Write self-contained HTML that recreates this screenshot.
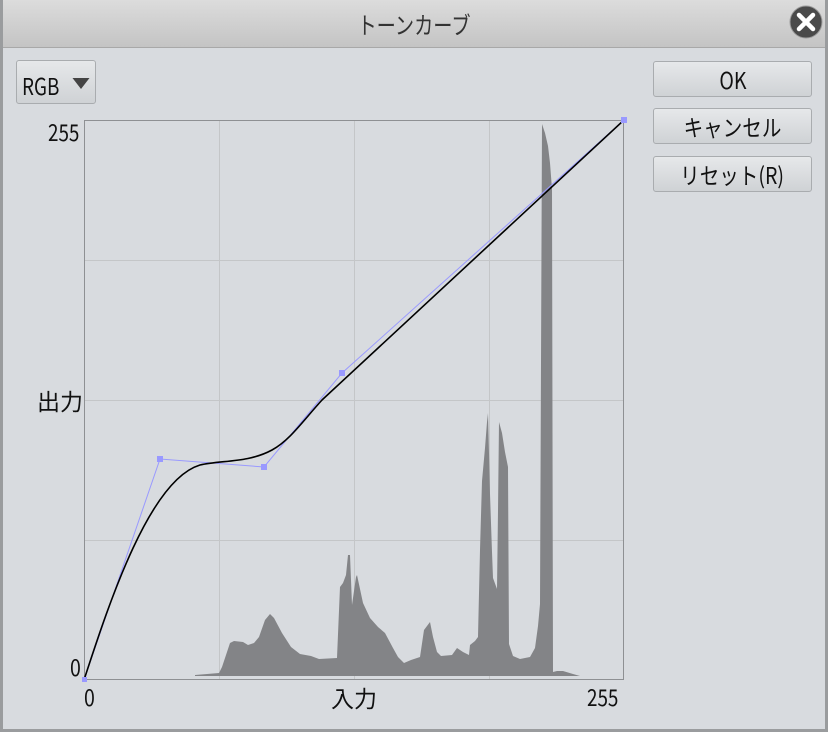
<!DOCTYPE html>
<html><head><meta charset="utf-8"><style>
body{margin:0;width:828px;height:732px;overflow:hidden;background:#9a9c9e;font-family:"Liberation Sans","Noto Sans CJK JP",sans-serif;}
#win{position:absolute;left:3px;top:0;width:822px;height:729px;background:#d8dbdf;}
#title{position:absolute;left:0;top:0;width:822px;height:47px;background:linear-gradient(#dcdcdc,#c4c4c4);border-bottom:1px solid #a8a8a8;}
#title span{position:absolute;left:0;width:822px;top:6px;text-align:center;font-size:24px;color:#333;font-family:"Noto Sans CJK JP",sans-serif;transform:scaleX(.8);}
.btn{position:absolute;background:linear-gradient(#e6e8ea,#cfd2d5);border:1px solid #a9acaf;border-radius:3px;text-align:center;color:#111;font-family:"Noto Sans CJK JP",sans-serif;}
.btn span{display:inline-block;transform:scaleX(.85);font-size:23px;}
.lbl{position:absolute;font-size:23px;color:#111;font-family:"Noto Sans CJK JP",sans-serif;line-height:1;}
</style></head><body>
<div id="win">
<div id="title"><span>トーンカーブ</span></div>
<div class="btn" style="left:13px;top:60px;width:78px;height:42px;"><span style="position:absolute;left:5px;top:7px;font-size:23px;display:inline-block;transform:scaleX(.82);transform-origin:left">RGB</span><span style="position:absolute;left:54px;top:17px;width:0;height:0;border-left:10px solid transparent;border-right:10px solid transparent;border-top:11px solid #444"></span></div>
<div class="btn" style="left:650px;top:61px;width:157px;height:34px;line-height:34px;"><span>OK</span></div>
<div class="btn" style="left:650px;top:108px;width:157px;height:34px;line-height:34px;"><span>キャンセル</span></div>
<div class="btn" style="left:650px;top:156px;width:157px;height:34px;line-height:34px;"><span>リセット(R)</span></div>
</div>
<svg width="828" height="732" style="position:absolute;left:0;top:0">
<circle cx="806" cy="22" r="16" fill="#4a4a4a" stroke="#9a9a9a" stroke-width="1"/>
<path d="M799 15 L813 29 M813 15 L799 29" stroke="#fff" stroke-width="4.5" stroke-linecap="round"/>
<g stroke="#c4c6c8" stroke-width="1">
<line x1="219.5" y1="120" x2="219.5" y2="680"/><line x1="354.5" y1="120" x2="354.5" y2="680"/><line x1="489.5" y1="120" x2="489.5" y2="680"/>
<line x1="84" y1="260.5" x2="624" y2="260.5"/><line x1="84" y1="400.5" x2="624" y2="400.5"/><line x1="84" y1="540.5" x2="624" y2="540.5"/>
</g>
<polygon fill="#838487" points="195,676 195,675 219,673 222,667 230,643 234,641 243,642 248,645 254,643 259,637 265,620 270,614 274,618 282,633 291,647 300,654 311,656 319,659 337,658 340,587 343,583 346,575 348,555 350,555 352,605 356,577 357,575 363,603 370,618 378,627 385,633 393,648 398,657 404,663 411,660 420,657 424,630 430,622 433,637 437,652 441,656 452,655 457,648 463,652 469,655 470,645 475,641 478,637 480,550 482,481 485,448 487,422 488,413 490,494 492,552 493,578 497,589 498,511 499,422 502,433 505,452 508,467 509,644 513,656 520,659 530,657 535,648 538,626 540,604 542,124 545,133 548,146 550,163 552,189 553,672 557,671 563,671 573,674 580,676"/>
<rect x="84.5" y="120.5" width="539" height="559" fill="none" stroke="#8e9093" stroke-width="1"/>
<polyline points="84,680 160,459 264,467 342,373 624,120" fill="none" stroke="#9999ff" stroke-width="1"/>
<path d="M84 680 C110 600 150 480 200 465 C222 460 248 463 272 450 C290 440 302 422 322 400 L624 120" fill="none" stroke="#000" stroke-width="1.6"/>
<g fill="#9999ff"><rect x="157" y="456" width="6" height="6"/><rect x="261" y="464" width="6" height="6"/><rect x="339" y="370" width="6" height="6"/><rect x="621" y="117" width="6" height="6"/><rect x="82" y="677" width="5" height="5"/></g>
</svg>
<div class="lbl" style="left:48px;top:120px;transform:scaleX(.82);transform-origin:left">255</div>
<div class="lbl" style="left:70px;top:655px;transform:scaleX(.85);transform-origin:left">0</div>
<div class="lbl" style="left:37px;top:389px;">出力</div>
<div class="lbl" style="left:84px;top:685px;transform:scaleX(.85);transform-origin:left">0</div>
<div class="lbl" style="left:331px;top:686px;">入力</div>
<div class="lbl" style="left:587px;top:685px;transform:scaleX(.82);transform-origin:left">255</div>
</body></html>
